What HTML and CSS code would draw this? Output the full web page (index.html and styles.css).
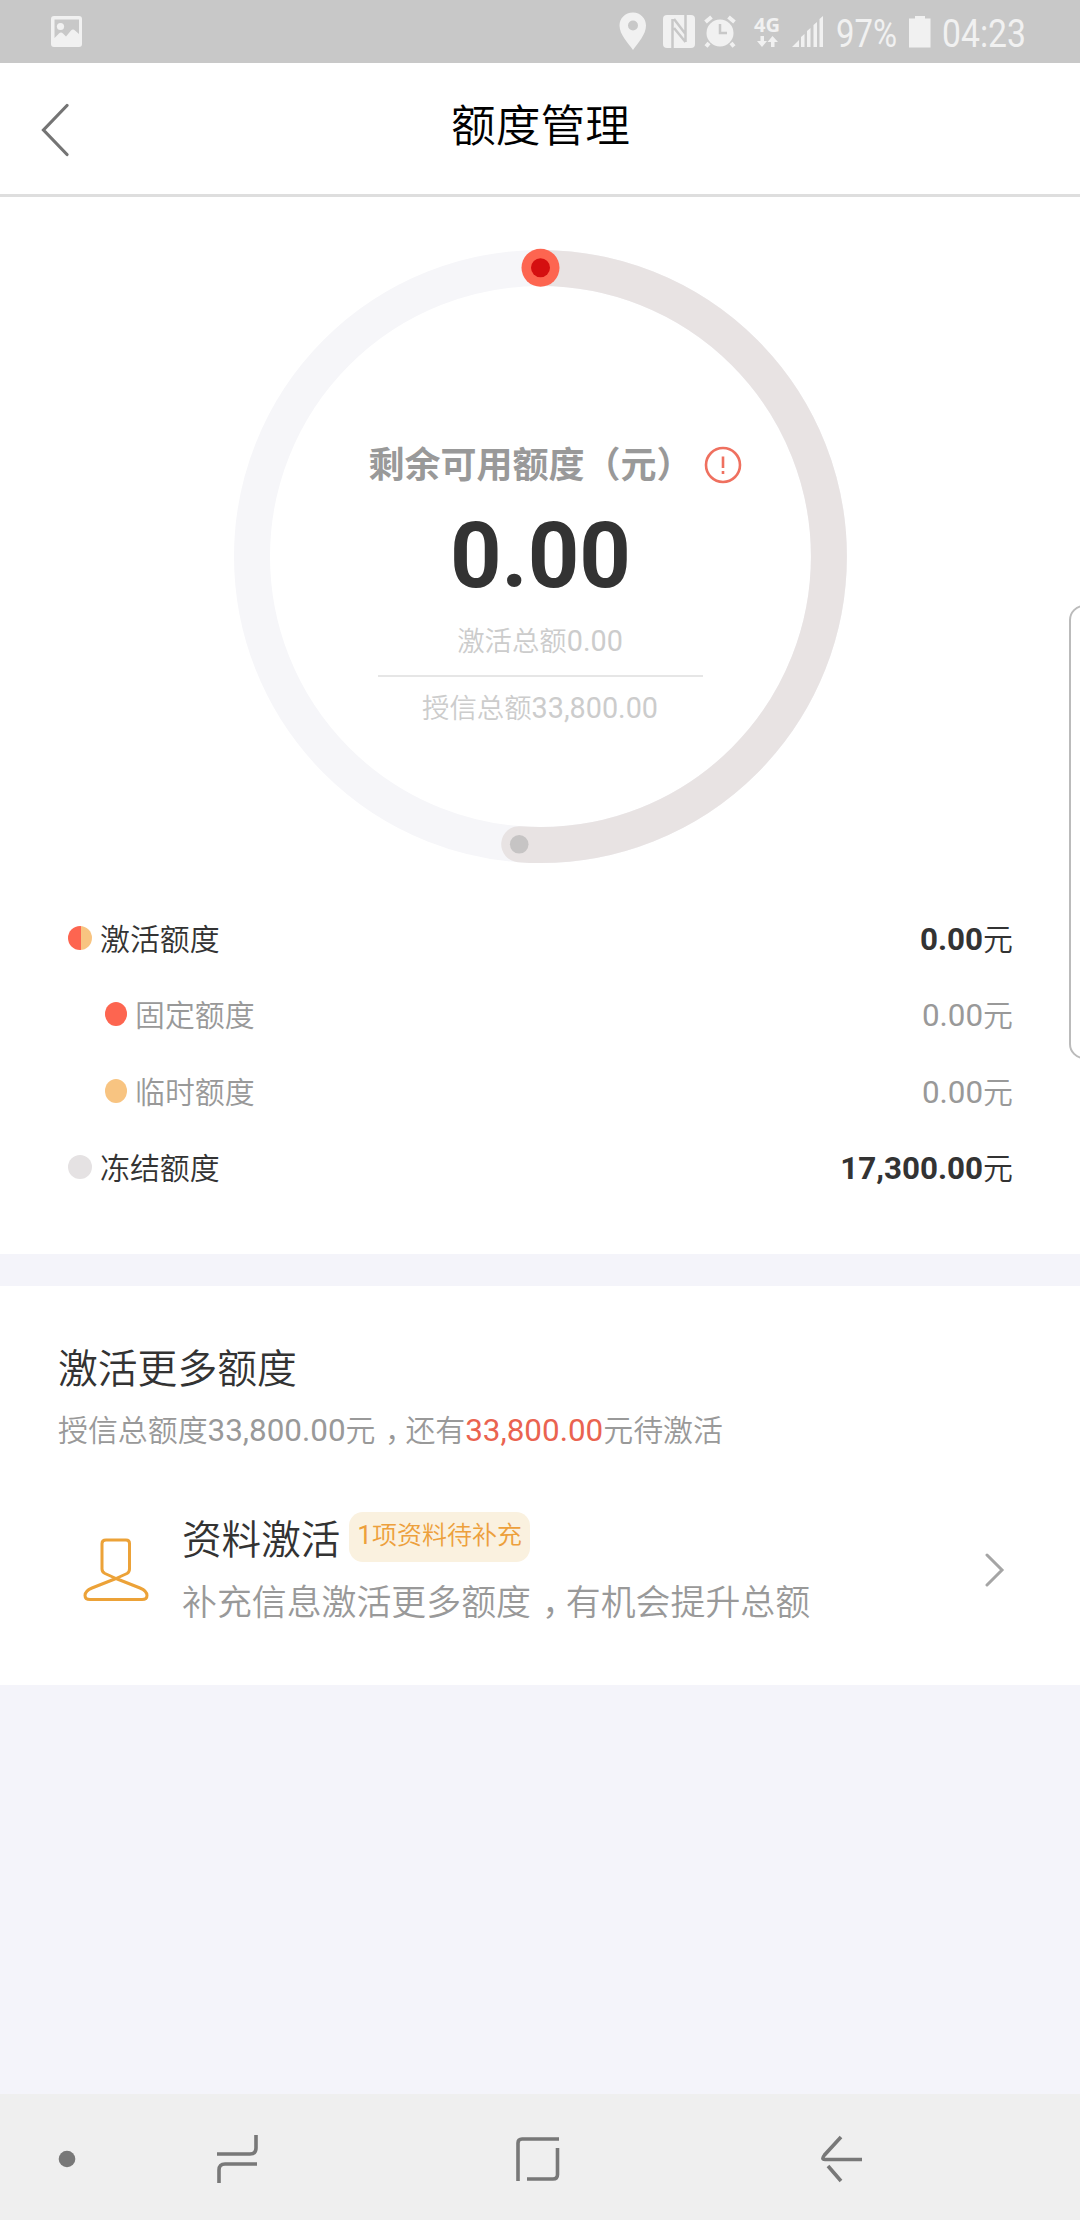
FILE: index.html
```html
<!DOCTYPE html>
<html lang="zh-CN">
<head>
<meta charset="utf-8">
<title>额度管理</title>
<link rel="stylesheet" href="styles.css">
</head>
<body>
<div class="screen">
  <div class="status-bar">
    <svg class="status-photo" width="32" height="32" viewBox="0 0 32 32"><path fill="currentColor" fill-rule="evenodd" d="M3 0H28Q31 0 31 3V28Q31 31 28 31H3Q0 31 0 28V3Q0 0 3 0ZM3.500 3.500V22L8 17.500Q10 15.500 12 17.500L15 20.500L20 14.500Q22 12.500 24 14.500L28 18V3.500Z"/><circle cx="9.500" cy="10.500" r="3.600" fill="currentColor"/></svg>
    <div class="status-icons">
      <svg width="28" height="39" viewBox="0 0 28 39"><path fill="currentColor" fill-rule="evenodd" d="M14 0.500C6 .5 .5 6.500 .5 13.500C.5 22.500 9 31 14 38C19 31 27 22.500 27 13.500C27 6.500 21.500 .5 14 .5ZM14 8.500A5 5 0 1 1 14 18.500A5 5 0 1 1 14 8.500Z"/></svg>
      <svg class="nfc" width="32" height="33" viewBox="0 0 32 33"><rect width="32" height="33" rx="4" fill="currentColor"/><path class="cut" d="M9.500 33V4M11 4L22.500 19M22.500 0V27M11 13L22.500 27"/></svg>
      <svg class="alarm" width="32" height="33" viewBox="0 0 32 33"><circle cx="16" cy="18" r="13.500" fill="currentColor"/><path d="M1.500 7L7.500 2M24.500 2L30.500 7M5 28L2 31.500M27 28L30 31.500" stroke="currentColor" stroke-width="4"/><path class="cut" d="M16 9V18H23"/></svg>
      <svg class="network" width="28" height="33" viewBox="0 0 28 33"><text class="network-text" x="0" y="16.500" textLength="26" lengthAdjust="spacingAndGlyphs">4G</text><path fill="currentColor" d="M6.500 21H10V26H13L8 32L3 26H6.500ZM17 32H20.500V27H24L18.500 21L13.500 27H17Z"/></svg>
      <svg class="signal" width="32" height="33" viewBox="0 0 32 33"><path fill="currentColor" d="M0 32L7 25V32ZM9 22L12.500 19V32H9ZM15 16L18.500 13V32H15ZM21.500 10L25 7V32H21.500ZM27.500 4L31 1V32H27.500Z"/></svg>
      <svg class="percent" width="62" height="48" viewBox="0 0 62 48"><text class="status-text" x="0" y="34.500" textLength="61" lengthAdjust="spacingAndGlyphs">97%</text></svg>
      <svg class="battery" width="22" height="33" viewBox="0 0 22 33"><path fill="currentColor" d="M6 1H16V3.500H21.500V32.500H0V3.500H6Z"/></svg>
      <svg class="clock" width="84" height="48" viewBox="0 0 84 48"><text class="status-text" x="0" y="34.500" textLength="84" lengthAdjust="spacingAndGlyphs">04:23</text></svg>
    </div>
  </div>

  <header class="title-bar">
    <svg class="back" width="28" height="54" viewBox="0 0 28 54"><path d="M26 2.500L2.500 27L26 51.500"/></svg>
    <h1 class="title">额度管理</h1>
  </header>

  <section class="quota">
    <div class="gauge">
      <svg class="ring" width="616" height="616" viewBox="0 0 616 616">
        <circle class="ring-track" cx="308.500" cy="308.500" r="288.500"/>
        <path class="ring-frozen" d="M308.500 20A288.500 288.500 0 0 1 308.500 597A288.500 288.500 0 0 1 287.200 596.210"/>
        <circle cx="287.200" cy="596.300" r="9.300" fill="#c6c4c4"/>
        <circle cx="308.500" cy="19.800" r="19" fill="#fd6550"/>
        <circle cx="308.500" cy="19.800" r="9.500" fill="#d50f10"/>
      </svg>
      <div class="gauge-text">
        <div class="remain-label">剩余可用额度（元）<svg class="info" width="38" height="38" viewBox="0 0 38 38"><circle cx="19" cy="19" r="17"/><path d="M19 10.500V22M19 25V28"/></svg></div>
        <div class="remain-value">0.00</div>
        <div class="total activated">激活总额<span class="num">0.00</span></div>
        <div class="total credit">授信总额<span class="num">33,800.00</span></div>
      </div>
    </div>

    <ul class="breakdown">
      <li class="entry"><i class="dot dot-split"></i><span class="name">激活额度</span><span class="amount"><b class="num">0.00</b>元</span></li>
      <li class="entry sub"><i class="dot dot-fixed"></i><span class="name">固定额度</span><span class="amount"><span class="num">0.00</span>元</span></li>
      <li class="entry sub"><i class="dot dot-temp"></i><span class="name">临时额度</span><span class="amount"><span class="num">0.00</span>元</span></li>
      <li class="entry"><i class="dot dot-frozen"></i><span class="name">冻结额度</span><span class="amount"><b class="num">17,300.00</b>元</span></li>
    </ul>
    <div class="side-handle"></div>
  </section>

  <section class="more">
    <h2 class="more-title">激活更多额度</h2>
    <p class="more-note">授信总额度<span class="num">33,800.00</span>元<span class="comma">，</span>还有<em class="num pending">33,800.00</em>元待激活</p>
    <div class="task">
      <svg class="person" width="66" height="64" viewBox="0 0 66 64"><path d="M23 2H43Q46.500 2 46.500 5.500V31Q46.500 34 44 35.500L33 40.500L22 35.500Q19 34 19 31V5.500Q19 2 23 2ZM33 40.500L9 50Q2 53 2 57.500Q2 61.500 7 61.500H59Q64 61.500 64 57.500Q64 53 57 50Z"/></svg>
      <div class="task-body">
        <div class="task-head"><span class="task-title">资料激活</span><span class="badge"><span class="num">1</span>项资料待补充</span></div>
        <p class="task-desc">补充信息激活更多额度<span class="comma">，</span>有机会提升总额</p>
      </div>
      <svg class="chevron" width="20" height="34" viewBox="0 0 20 34"><path d="M2 2L17 17L2 32"/></svg>
    </div>
  </section>

  <nav class="nav-bar">
    <svg class="nav-dot" width="18" height="18" viewBox="0 0 18 18"><circle cx="9" cy="9" r="8.300"/></svg>
    <svg class="nav-recents" width="44" height="50" viewBox="0 0 44 50"><path d="M1 20H34Q40 20 40 14V1M41 30H9Q3 30 3 36V49"/></svg>
    <svg class="nav-home" width="44" height="46" viewBox="0 0 44 46"><path d="M2 45V7Q2 3 6 3H43M11 43H37Q41.500 43 41.500 38.500V12"/></svg>
    <svg class="nav-back" width="42" height="48" viewBox="0 0 42 48"><path d="M20 2L3.500 20Q0 24.500 4 24.500H41M7 31L20 46"/></svg>
  </nav>
</div>
</body>
</html>
```
FILE: styles.css
```css
* { box-sizing: border-box; margin: 0; padding: 0; }

body {
  background: #f4f4fa;
  color: #333;
  font-family: Roboto, "Noto Sans CJK SC", sans-serif;
  font-weight: 350;
}

svg { display: block; flex: none; }

/* Latin digits run slightly larger than the Chinese text around them */
.num { font-size: 1.05em; font-weight: 400; line-height: 1; }
b.num { font-weight: 700; }

.screen {
  display: flex;
  flex-direction: column;
  width: 1080px;
  height: 2220px;
  overflow: hidden;
}

/* status bar */
.status-bar {
  display: flex;
  justify-content: space-between;
  height: 63px;
  padding: 0 54px 0 51px;
  background: #c8c8c8;
  color: #f1f1f1;
}
.status-photo { margin-top: 16px; }
.status-icons { display: flex; align-items: flex-start; padding-top: 12px; }
.nfc, .alarm, .network, .signal, .battery { margin-top: 3px; }
.nfc { margin-left: 16px; }
.alarm { margin-left: 9px; }
.network { margin-left: 18px; }
.signal { margin-left: 10px; }
.percent { margin-left: 12px; }
.battery { margin-left: 11px; }
.clock { margin-left: 11px; }
.network, .percent, .clock { overflow: visible; }
.cut { fill: none; stroke: #c8c8c8; stroke-width: 2.500; }
.status-text { font-size: 39px; font-weight: 400; fill: currentColor; }
.network-text { font: 700 19px "Noto Sans", sans-serif; fill: currentColor; }

/* title bar */
.title-bar {
  display: grid;
  grid-template-columns: 120px 1fr 120px;
  height: 134px;
  background: #fff;
  border-bottom: 3px solid #dedede;
}
.back { margin: 40px 0 0 41px; }
.back path { fill: none; stroke: #747474; stroke-width: 3.200; stroke-linecap: round; }
.title {
  color: #000;
  font-size: 44.700px;
  font-weight: 350;
  line-height: 64px;
  text-align: center;
  padding: 32px 0 0 1px;
}

/* quota overview */
.quota {
  position: relative;
  height: 1057px;
  padding-top: 51px;
  background: #fff;
}
.gauge {
  display: grid;
  justify-content: center;
  grid-template-columns: 616px;
  height: 616px;
}
.ring, .gauge-text { grid-area: 1 / 1; }
.ring { overflow: visible; }
.ring-track { fill: none; stroke: #f6f6f9; stroke-width: 36; }
.ring-frozen { fill: none; stroke: #e8e3e3; stroke-width: 36; stroke-linecap: round; }
.gauge-text {
  display: flex;
  flex-direction: column;
  align-items: center;
  padding-top: 188px;
}
.remain-label {
  display: flex;
  align-items: center;
  align-self: flex-start;
  margin-left: 136.500px;
  height: 52px;
  color: #999;
  font-size: 36px;
  font-weight: 700;
  white-space: nowrap;
}
.info { margin: 6px 0 0 11px; }
.info circle, .info path { fill: none; stroke: #ef705f; stroke-width: 2.600; }
.remain-value {
  font-size: 90px;
  font-weight: 700;
  line-height: 106px;
  margin: 16px 0 0 1px;
}
.total {
  width: 325px;
  color: #ccc;
  font-size: 27.400px;
  line-height: 40px;
  text-align: center;
}
.activated { margin-top: 12px; height: 55px; border-bottom: 2px solid #e6e6e6; }
.credit { margin-top: 12px; }

/* breakdown */
.breakdown {
  list-style: none;
  padding: 35px 67px 0 68px;
}
.entry {
  display: flex;
  align-items: center;
  height: 76.300px;
  font-size: 29.900px;
}
.dot { width: 24px; height: 24px; border-radius: 50%; margin: 2px 8px 0 0; }
.entry.sub { padding-left: 37px; color: #999; }
.sub .dot { width: 22px; }
.dot-split { background: linear-gradient(90deg, #fd6550 54%, #f8c481 54%); }
.dot-fixed { background: #fd6550; }
.dot-temp { background: #f8c481; }
.dot-frozen { background: #e5e2e3; }
.amount { margin-left: auto; }

.side-handle {
  position: absolute;
  right: -20px;
  top: 408px;
  width: 31px;
  height: 454px;
  border: 2px solid #bbb;
  border-radius: 15px;
}

/* more quota */
.more {
  height: 399px;
  margin-top: 32px;
  padding: 54px 58px 0;
  background: #fff;
}
.more-title { font-size: 39.800px; font-weight: 350; line-height: 60px; }
.more-note { color: #999; font-size: 29.920px; line-height: 44px; margin-top: 9px; }
/* half-width comma set in the middle of a full-width cell */
.comma { padding: 0 .18em 0 .32em; font-feature-settings: "halt"; }
.pending { color: #ea6350; font-style: normal; }
.task { display: flex; padding: 56px 17px 0 25px; }
.person { margin-top: 29px; }
.person path { fill: none; stroke: #eca238; stroke-width: 3; stroke-linejoin: round; }
.task-body { margin-left: 33px; }
.task-head { display: flex; }
.task-title { font-size: 39.600px; line-height: 63px; }
.badge {
  height: 50px;
  margin: 3px 0 0 9px;
  padding: 0 8px;
  border-radius: 14px;
  background: #faf1df;
  color: #eda03c;
  font-size: 25px;
  line-height: 47px;
}
.task-desc { color: #999; font-size: 34.900px; line-height: 52px; margin-top: 6px; }
.chevron { margin: 44px 0 0 auto; }
.chevron path { fill: none; stroke: #a5a5a5; stroke-width: 3; stroke-linecap: round; }

/* system navigation */
.nav-bar {
  display: flex;
  align-items: center;
  height: 126px;
  margin-top: auto;
  padding: 3px 0 0 58px;
  background: #efefef;
}
.nav-bar path { fill: none; stroke: #787878; stroke-width: 3.600; }
.nav-dot { fill: #787878; }
.nav-recents { margin-left: 140px; }
.nav-home { margin-left: 256px; }
.nav-back { margin-left: 261px; }
```
